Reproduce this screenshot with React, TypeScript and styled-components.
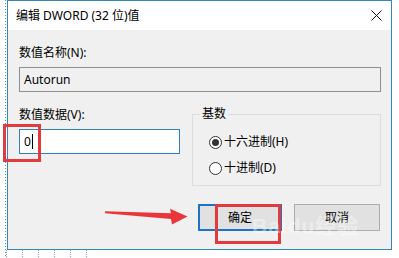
import React from "react";
import styled, { createGlobalStyle } from "styled-components";

const Global = createGlobalStyle`
  html, body { margin: 0; padding: 0; background: #fff; }
  body {
    font-family: "Noto Sans", "Noto Sans CJK SC", sans-serif;
    font-size: 12px;
    color: #000;
  }
`;

const Page = styled.div`
  width: 399px;
  height: 258px;
  overflow: hidden;
  box-sizing: border-box;
  padding-left: 7px;
  display: flex;
  flex-direction: column;
  background-color: #fff;
  background-image: linear-gradient(to bottom, #5f8aa8 50%, transparent 50%);
  background-size: 1px 3px;
  background-repeat: repeat-y;
  background-position: 5px 0;
`;

const Dialog = styled.div`
  position: relative;
  width: 385px;
  height: 250px;
  flex: none;
  box-sizing: border-box;
  border: 1px solid #3684bd;
  background: #f0f0f0;
  display: flex;
  flex-direction: column;
`;

const TitleBar = styled.div`
  height: 29px;
  flex: none;
  background: #fff;
  display: flex;
  align-items: center;
  justify-content: space-between;
  padding: 0 9px 0 8px;
  line-height: 16px;
`;

const Title = styled.span`
  font-size: 12px;
  white-space: nowrap;
`;

const Body = styled.div`
  flex: 1;
  display: flex;
  flex-direction: column;
  padding: 15px 10px 18px 11px;
`;

const Label = styled.div`
  line-height: 16px;
  margin-bottom: 6px;
  white-space: nowrap;
`;

const TextBox = styled.div<{ $readonly?: boolean }>`
  position: relative;
  height: 25px;
  box-sizing: border-box;
  border: 1px solid ${(p) => (p.$readonly ? "#8e8e8e" : "#2f7fc1")};
  background: ${(p) => (p.$readonly ? "#f0f0f0" : "#fff")};
  padding: 0 4px;
  display: flex;
  align-items: center;
  line-height: 16px;
`;

const Caret = styled.span`
  display: inline-block;
  width: 1px;
  height: 15px;
  margin-left: 1px;
  background: #000;
`;

const Row = styled.div`
  display: flex;
  gap: 12px;
  margin-top: 15px;
`;

const LeftCol = styled.div`
  width: 161px;
  flex: none;
`;

const Group = styled.fieldset`
  flex: 1;
  margin: 0;
  min-width: 0;
  border: 1px solid #dcdcdc;
  padding: 0 0 9px 7px;
`;

const Legend = styled.legend`
  padding: 0 2px;
  line-height: 14px;
  font-size: 12px;
`;

const RadioList = styled.div`
  display: flex;
  flex-direction: column;
  gap: 10px;
  padding: 13px 0 0 9px;
`;

const RadioRow = styled.div`
  display: flex;
  align-items: center;
  gap: 2px;
  line-height: 16px;
  white-space: nowrap;
`;

const RadioCircle = styled.span<{ $checked?: boolean }>`
  width: 13px;
  height: 13px;
  box-sizing: border-box;
  border-radius: 50%;
  border: 1px solid #333;
  background: #fff;
  display: flex;
  align-items: center;
  justify-content: center;
  &::after {
    content: "";
    width: 7px;
    height: 7px;
    border-radius: 50%;
    background: ${(p) => (p.$checked ? "#333" : "transparent")};
  }
`;

const ButtonRow = styled.div`
  display: flex;
  justify-content: flex-end;
  gap: 12px;
  margin-top: 18px;
  padding-right: 1px;
`;

const Button = styled.div<{ $primary?: boolean }>`
  position: relative;
  width: ${(p) => (p.$primary ? "84px" : "86px")};
  height: 27px;
  box-sizing: border-box;
  border: ${(p) => (p.$primary ? "2px solid #1d74c6" : "1px solid #adadad")};
  background: #e1e1e1;
  display: flex;
  align-items: center;
  justify-content: center;
  line-height: 16px;
`;

const Annotation = styled.span<{ $l: number; $t: number; $w: number; $h: number }>`
  position: absolute;
  left: ${(p) => p.$l}px;
  top: ${(p) => p.$t}px;
  width: ${(p) => p.$w}px;
  height: ${(p) => p.$h}px;
  box-sizing: border-box;
  border: 3px solid #e03b3f;
  pointer-events: none;
`;

const Arrow = styled.svg`
  position: absolute;
  left: 94px;
  top: 203px;
  overflow: visible;
`;

const Watermark = styled.div`
  position: absolute;
  left: 244px;
  top: 208px;
  font-family: "Liberation Sans", "Noto Sans CJK SC", sans-serif;
  font-size: 21px;
  font-weight: bold;
  letter-spacing: 1px;
  color: rgba(255, 255, 255, 0.4);
  white-space: nowrap;
  pointer-events: none;
`;

const Footer = styled.div`
  height: 8px;
  width: 85px;
  margin-left: -1px;
  background-image: linear-gradient(to bottom, transparent 1px, #fff 1px),
    linear-gradient(to right, #7d9db3 1px, transparent 1px);
  background-size: 100% 2px, 16px 100%;
`;

const CloseIcon = () => (
  <svg width="11" height="11" viewBox="0 0 11 11">
    <path d="M0.5 0.5 L10.5 10.5 M10.5 0.5 L0.5 10.5" stroke="#111" strokeWidth="1" fill="none" />
  </svg>
);

export default function App() {
  return (
    <>
      <Global />
      <Page>
        <Dialog>
          <TitleBar>
            <Title>编辑 DWORD (32 位)值</Title>
            <CloseIcon />
          </TitleBar>
          <Body>
            <Label>数值名称(N):</Label>
            <TextBox $readonly>Autorun</TextBox>
            <Row>
              <LeftCol>
                <Label>数值数据(V):</Label>
                <TextBox>
                  0<Caret />
                  <Annotation $l={-17} $t={-6} $w={38} $h={38} />
                </TextBox>
              </LeftCol>
              <Group>
                <Legend>基数</Legend>
                <RadioList>
                  <RadioRow>
                    <RadioCircle $checked />
                    十六进制(H)
                  </RadioRow>
                  <RadioRow>
                    <RadioCircle />
                    十进制(D)
                  </RadioRow>
                </RadioList>
              </Group>
            </Row>
            <ButtonRow>
              <Button $primary>
                确定
                <Annotation $l={15} $t={-2} $w={66} $h={40} />
              </Button>
              <Button>取消</Button>
            </ButtonRow>
          </Body>
          <Watermark>Baidu经验</Watermark>
          <Arrow width="90" height="24" viewBox="0 0 90 24">
            <polygon
              points="3,7.3 69,9.2 68,4.8 85.5,12.5 70,20.5 69,15 3,9.2"
              fill="#e8363a"
            />
          </Arrow>
        </Dialog>
        <Footer />
      </Page>
    </>
  );
}
